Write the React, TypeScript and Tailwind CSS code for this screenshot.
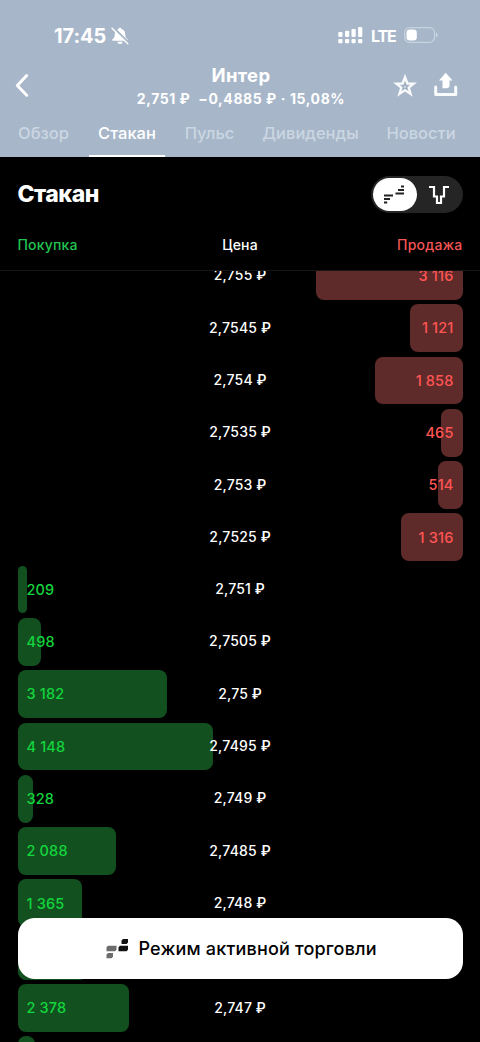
type Level = { price: string; amount?: string; width: number; side: 'buy' | 'sell' };

const levels: Level[] = [
  { price: '2,755', amount: '3 116', width: 146.5, side: 'sell' },
  { price: '2,7545', amount: '1 121', width: 52.5, side: 'sell' },
  { price: '2,754', amount: '1 858', width: 87.5, side: 'sell' },
  { price: '2,7535', amount: '465', width: 21.5, side: 'sell' },
  { price: '2,753', amount: '514', width: 24.5, side: 'sell' },
  { price: '2,7525', amount: '1 316', width: 61.5, side: 'sell' },
  { price: '2,751', amount: '209', width: 9.5, side: 'buy' },
  { price: '2,7505', amount: '498', width: 23.2, side: 'buy' },
  { price: '2,75', amount: '3 182', width: 149.5, side: 'buy' },
  { price: '2,7495', amount: '4 148', width: 195.3, side: 'buy' },
  { price: '2,749', amount: '328', width: 15.3, side: 'buy' },
  { price: '2,7485', amount: '2 088', width: 98, side: 'buy' },
  { price: '2,748', amount: '1 365', width: 64.3, side: 'buy' },
  { price: '', width: 69, side: 'buy' },
  { price: '2,747', amount: '2 378', width: 111.7, side: 'buy' },
  { price: '', width: 17.5, side: 'buy' },
];

function Ruble() {
  return <span className="font-['Roboto','Inter',sans-serif]">₽</span>;
}

function StatusBar() {
  return (
    <div className="flex h-[20px] items-center pl-[54px] pr-[41px]">
      <span className="w-[53px] whitespace-nowrap text-[20px] font-bold leading-none tracking-[-0.1px]">17:45</span>
      <svg className="ml-[4px] shrink-0" width="18" height="18" viewBox="0 0 18 18" fill="currentColor">
        <path d="M9 .8c.8 0 1.3.5 1.4 1.2 2.5.6 3.7 2.5 3.8 5 .1 3 .6 3.900 2.300 5.300.5.400.5 1.500-.4 1.500H1.900c-.9 0-.9-1.100-.4-1.500C3.200 10.900 3.700 10 3.800 7c.1-2.500 1.300-4.400 3.800-5C7.700 1.300 8.200.8 9 .8Z" />
        <path d="M6.300 14.800h5.400c-.3 1.400-1.300 2.200-2.700 2.200s-2.400-.8-2.700-2.200Z" />
        <path d="M2.200.8 17.800 16.200" stroke="#a7b7c9" strokeWidth="2.800" />
        <path d="M1 1.300 16.800 16.700" stroke="currentColor" strokeWidth="1.400" strokeLinecap="round" />
      </svg>
      <svg className="ml-auto shrink-0" width="26" height="18" viewBox="0 0 26 18" fill="currentColor">
        <rect x=".3" y="5" width="4.200" height="5" rx="1" />
        <rect x="7" y="3.800" width="4.200" height="6.200" rx="1" />
        <rect x="13.500" y="2" width="4.200" height="8" rx="1" />
        <rect x="20.100" y="0" width="4.200" height="10" rx="1" />
        <rect x=".3" y="12" width="4.200" height="4.300" rx="1" />
        <rect x="7" y="12" width="4.200" height="4.300" rx="1" />
        <rect x="13.500" y="12" width="4.200" height="4.300" rx="1" />
        <rect x="20.100" y="12" width="4.200" height="4.300" rx="1" />
      </svg>
      <span className="ml-[7px] w-[26px] whitespace-nowrap text-[16px] font-bold leading-none tracking-[-1.100px]">LTE</span>
      <svg className="ml-[7px] -mt-[2px] shrink-0" width="35" height="16" viewBox="0 0 35 16" fill="none">
        <rect x=".7" y=".7" width="29.800" height="14.600" rx="4.800" stroke="#cfdae5" strokeOpacity=".8" strokeWidth="1.200" />
        <path d="M32.200 5.500c1.800.6 1.800 4.400 0 5z" fill="#d3dde7" />
        <rect x="2.500" y="2.500" width="10.300" height="11" rx="3.300" fill="white" />
      </svg>
    </div>
  );
}

function TitleBar() {
  return (
    <div className="flex h-[46px] items-center pl-[14px] pr-[22px]">
      <svg className="shrink-0" width="82" height="26" viewBox="0 0 82 26" fill="none">
        <path d="M12.700 3.500 3.300 13.500l9.400 9.700" stroke="white" strokeWidth="3" strokeLinecap="round" strokeLinejoin="round" />
      </svg>
      <div className="ml-[25px] flex w-[240px] flex-col items-center pt-[2px]">
        <h1 className="text-[18.500px] font-bold leading-[23px] tracking-[0.3px]">Интер</h1>
        <p className="mt-[2px] flex gap-[8px] whitespace-nowrap text-[14px] font-bold leading-[20px] tracking-[0.6px]">
          <span>2,751 <Ruble /></span>
          <span>−0,4885 <Ruble /> · 15,08%</span>
        </p>
      </div>
      <div className="ml-auto flex w-[66px] shrink-0 items-center justify-between">
        <svg className="mt-[2px]" width="26" height="26" viewBox="0 0 26 26">
          <path
            d="m13 .8 3.300 8.800h8.700l-7 5.300 2.700 8.900-7.700-5.400-7.700 5.400L8 14.900 1 9.600h8.700zm0 6.700-1.600 4.300H7.600l3 2.400-1.200 4 3.600-2.400 3.600 2.400-1.200-4 3-2.400h-3.800z"
            fill="white"
            fillOpacity=".92"
            fillRule="evenodd"
          />
          <path d="m13 10.300.9 2.600h2.400l-1.900 1.500.7 2.400-2.100-1.500-2.100 1.500.7-2.400-1.900-1.500h2.400z" fill="#8497aa" fillOpacity=".6" />
          <path d="m13 12 .4 1.500h1.300l-1 .8.4 1.300-1.100-.8-1.100.8.4-1.300-1-.8h1.300z" fill="#e1e8ef" />
        </svg>
        <svg width="25" height="26" viewBox="0 0 25 26" fill="none">
          <path d="m12.700.8 6.800 7.600h-3v5.100c0 1.800-1 2.700-3 2.700H9.500V8.400H6z" fill="white" />
          <path d="M2.700 15v7.500h20V15" stroke="white" strokeOpacity=".93" strokeWidth="3" strokeLinecap="round" strokeLinejoin="round" />
        </svg>
      </div>
    </div>
  );
}

function Tabs() {
  const tab = 'flex h-[48px] shrink-0 items-center justify-center whitespace-nowrap pt-[1px]';
  return (
    <nav className="flex text-[16.500px] font-medium tracking-[0px] text-[#cbd6e2]">
      <span className={tab + ' w-[87px]'}>Обзор</span>
      <span className="ml-[2px] flex h-[48px] w-[76px] shrink-0 items-center justify-center border-b-[2px] border-white pt-[3px] text-white">Стакан</span>
      <span className={tab + ' w-[89px]'}>Пульс</span>
      <span className={tab + ' w-[113px]'}>Дивиденды</span>
      <span className={tab + ' w-[108px]'}>Новости</span>
    </nav>
  );
}

function ViewSwitch() {
  return (
    <div className="flex h-[37px] w-[92px] items-center rounded-full bg-[#252525] p-[2px]">
      <div className="flex h-[33px] w-[44px] items-center justify-center rounded-full bg-white">
        <svg className="-ml-[2px] -mt-[2px]" width="22" height="20" viewBox="0 0 22 20" fill="none" stroke="#222" strokeWidth="2">
          <path d="M18 2.500h3M15 6h6M12.500 9.500H21M1 11.500h9M1 15h6M1 18.500h3.200" />
        </svg>
      </div>
      <svg className="ml-[11px]" width="22" height="20" viewBox="0 0 22 20" fill="none">
        <path d="M1 2h5v9.500h3V18h4v-6.500h3V2h5" stroke="white" strokeWidth="2.200" />
      </svg>
    </div>
  );
}

function Row({ level }: { level: Level }) {
  const buy = level.side === 'buy';
  return (
    <li className="grid h-[52.31px] shrink-0 grid-cols-[minmax(0,1fr)_62px_minmax(0,1fr)] items-start">
      <div className={buy ? 'col-start-1 row-start-1 h-[47.8px]' : 'col-start-3 row-start-1 flex h-[47.8px] justify-end'}>
        <div
          className={
            buy
              ? 'flex h-full items-center rounded-[8px] bg-[#125020] pl-[9px] text-[#13d53d]'
              : 'flex h-full items-center justify-end rounded-[8px] bg-[#5f2a2a] pr-[9px] text-[#ff5553]'
          }
          style={{ width: level.width }}
        >
          <span className="whitespace-nowrap pt-[1px] text-[14.500px] font-medium leading-none tracking-[0.15px]">{level.amount}</span>
        </div>
      </div>
      {level.price && (
        <span className="col-start-2 row-start-1 flex h-[47px] items-center justify-center whitespace-nowrap text-[14px] font-medium tracking-[0.2px] text-white">
          <span>{level.price} <Ruble /></span>
        </span>
      )}
    </li>
  );
}

export default function App() {
  return (
    <div className="relative flex h-[1042px] w-[480px] flex-col overflow-hidden bg-black font-['Inter',sans-serif] text-white">
      <header className="flex h-[157px] shrink-0 flex-col bg-[#a7b7c9] pt-[26px]">
        <StatusBar />
        <div className="pt-[16px]">
          <TitleBar />
        </div>
        <div className="mt-[1px]">
          <Tabs />
        </div>
      </header>

      <section className="flex h-[114px] shrink-0 flex-col border-b border-[#171717] px-[17.500px]">
        <div className="flex h-[75px] items-center justify-between">
          <h2 className="text-[23px] font-extrabold leading-none tracking-[-0.5px]">Стакан</h2>
          <ViewSwitch />
        </div>
        <div className="grid h-[24px] grid-cols-3 items-center text-[14px] font-medium tracking-[0.2px]">
          <span className="text-[#21c451]">Покупка</span>
          <span className="text-center">Цена</span>
          <span className="text-right text-[#f45555]">Продажа</span>
        </div>
      </section>

      <main className="min-h-0 flex-1 overflow-hidden px-[17.500px]">
        <ul className="-mt-[19.100px]">
          {levels.map((level, index) => (
            <Row key={index} level={level} />
          ))}
        </ul>
      </main>

      <button className="absolute bottom-[63px] left-[17.500px] flex h-[61px] w-[445px] items-center rounded-[17px] bg-white pl-[88px] text-black">
        <svg width="22" height="20" viewBox="0 0 22 20">
          <path d="M17 0h5v3.500L20.500 5h-5V1.500zM14 6.800h8v4l-1.500 1.500h-8V8.300z" fill="#111" />
          <path d="M2 6.800h8.500v4L9 12.300H.500v-4zM2 14h5v3.700l-1.500 1.500h-5v-3.700z" fill="#6c6c6c" />
        </svg>
        <span className="ml-[11px] whitespace-nowrap text-[18px] font-medium tracking-[0.18px]">Режим активной торговли</span>
      </button>
    </div>
  );
}
